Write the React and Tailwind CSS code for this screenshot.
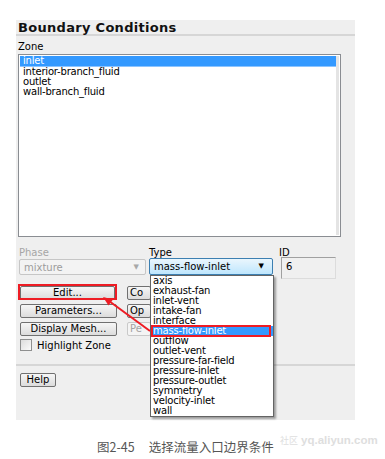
import React from "react";

const F = { fontFamily: '"DejaVu Sans", Verdana, sans-serif' };

function Btn({ children, className = "", disabled = false }) {
  return (
    <div
      className={
        "h-[14px] rounded-[2px] border flex items-center justify-center text-[10px] leading-[12px] whitespace-nowrap overflow-hidden " +
        (disabled
          ? "border-[#c9c9c9] bg-[#f4f4f4] text-[#a3a3a3] "
          : "border-[#707070] bg-gradient-to-b from-[#f6f6f6] to-[#dcdcdc] text-black ") +
        className
      }
    >
      {children}
    </div>
  );
}

const types = [
  "axis",
  "exhaust-fan",
  "inlet-vent",
  "intake-fan",
  "interface",
  "mass-flow-inlet",
  "outflow",
  "outlet-vent",
  "pressure-far-field",
  "pressure-inlet",
  "pressure-outlet",
  "symmetry",
  "velocity-inlet",
  "wall",
];

export default function App() {
  return (
    <div className="relative w-[385px] h-[459px] bg-white overflow-hidden" style={F}>
      <div className="relative ml-[16px] mt-[20px] w-[339px] h-[400px] bg-[#efefef]">
        <div className="h-[14px] pl-[2px] text-[13px] font-bold leading-[15px] tracking-[0.3px] text-[#111]">
          Boundary Conditions
        </div>
        <div className="h-[2px] bg-[#d6d6d6]" />
        <div className="mt-[5px] pl-[2px] h-[12px] leading-[12px] text-[10px] text-black">Zone</div>
        <div className="ml-[2px] mt-[1px] w-[323px] h-[183px] border border-[#8a8d92] bg-white p-[1px]">
          <div className="h-full border-r-[3px] border-[#e4e4e4] text-[10px] leading-[10px] tracking-[-0.2px]">
            <div className="h-[10px] bg-[#3399ff] border-b border-[#8cc4ff] text-white pl-[3px] box-content">inlet</div>
            <div className="h-[10px] pl-[3px]">interior-branch_fluid</div>
            <div className="h-[10px] pl-[3px]">outlet</div>
            <div className="h-[10px] pl-[3px]">wall-branch_fluid</div>
          </div>
        </div>

        <div className="flex mt-[10px] h-[11px] text-[10px] leading-[11px]">
          <div className="ml-[3px] w-[130px] text-[#a6a6a6]">Phase</div>
          <div className="w-[130px] text-black">Type</div>
          <div className="text-black">ID</div>
        </div>

        <div className="flex items-start h-[22px] text-[10px]">
          <div className="ml-[3px] mt-[1px] w-[127px] h-[16px] border border-[#c6c6c6] rounded-[2px] bg-[#f3f3f3] flex items-center pl-[4px] pr-[6px] text-[#9c9c9c]">
            <span className="flex-1">mixture</span>
            <span className="text-[7px] text-[#a8a8a8]">▼</span>
          </div>
          <div className="ml-[3px] w-[124px] h-[17px] border border-[#3c7fb1] rounded-[2px] bg-gradient-to-b from-[#eaf6fd] to-[#bee6fd] flex items-center pl-[4px] pr-[8px] text-black">
            <span className="flex-1">mass-flow-inlet</span>
            <span className="text-[7px]">▼</span>
          </div>
          <div className="ml-[8px] mt-[-1px] w-[55px] h-[22px] border border-[#a0a0a0] border-r-[#dcdcdc] border-b-[#dcdcdc] bg-[#f0f0f0] pl-[4px] pt-[3px] leading-[11px] text-black">
            6
          </div>
        </div>

        <div className="mt-[6px] flex flex-col gap-[4px]">
          <div className="flex">
            <div className="relative ml-[4px] w-[95px]">
              <Btn>Edit...</Btn>
              <div className="absolute -left-[2px] -top-[2px] w-[99px] h-[16px] border-2 border-[#ee1c24]" />
            </div>
            <Btn className="ml-[12px] w-[24px] justify-start pl-[2px]">Co</Btn>
          </div>
          <div className="flex">
            <Btn className="ml-[4px] w-[97px]">Parameters...</Btn>
            <Btn className="ml-[10px] w-[24px] justify-start pl-[2px]">Op</Btn>
          </div>
          <div className="flex">
            <Btn className="ml-[4px] w-[97px]">Display Mesh...</Btn>
            <Btn disabled className="ml-[10px] w-[24px] justify-start pl-[2px]">Pe</Btn>
          </div>
        </div>

        <div className="flex items-center mt-[3px] h-[12px] text-[10px]">
          <div className="ml-[4px] w-[12px] h-[12px] border border-[#8e8f8f] bg-gradient-to-br from-[#dcdcdc] to-[#fbfbfb]" />
          <span className="ml-[5px]">Highlight Zone</span>
        </div>

        <div className="mt-[13px] h-[2px] bg-[#d6d6d6]" />

        <Btn className="ml-[4px] mt-[7px] w-[36px]">Help</Btn>

        <div className="absolute left-[134px] top-[255px] w-[124px] h-[142px] bg-white border border-[#646464] shadow-[2px_2px_2px_rgba(0,0,0,0.35)] text-[10px] leading-[10px] tracking-[-0.2px]">
          {types.map((t) =>
            t === "mass-flow-inlet" ? (
              <div key={t} className="relative h-[10px] bg-[#3399ff] text-white pl-[2px]">
                {t}
                <div className="absolute left-0 top-[-1px] w-[120px] h-[12px] border-2 border-[#ee1c24]" />
              </div>
            ) : (
              <div key={t} className="h-[10px] pl-[2px] text-black">
                {t}
              </div>
            )
          )}
        </div>
      </div>

      <svg className="absolute left-0 top-0" width="385" height="459">
        <line x1="150" y1="331" x2="109" y2="301" stroke="#ee1c24" strokeWidth="2" />
        <polygon points="103,297 113,299.5 108.5,305.5" fill="#ee1c24" />
      </svg>

      <div
        className="mt-[20px] ml-[97px] flex h-[14px] items-center text-[12.5px] leading-[14px] text-[#555]"
        style={{ fontFamily: '"Noto Sans CJK SC", "Noto Sans", sans-serif' }}
      >
        <span>图2-45</span>
        <span className="ml-[14px]">选择流量入口边界条件</span>
      </div>
      <div
        className="absolute left-[280px] top-[434px] flex items-center h-[14px] text-[#dedede]"
        style={{ fontFamily: '"Noto Sans CJK SC", "Liberation Sans", sans-serif' }}
      >
        <span className="text-[9px]">社区</span>
        <span className="ml-[3px] text-[11.5px] font-bold" style={{ fontFamily: '"Liberation Sans", Arial, sans-serif' }}>
          yq.aliyun.com
        </span>
      </div>
    </div>
  );
}
